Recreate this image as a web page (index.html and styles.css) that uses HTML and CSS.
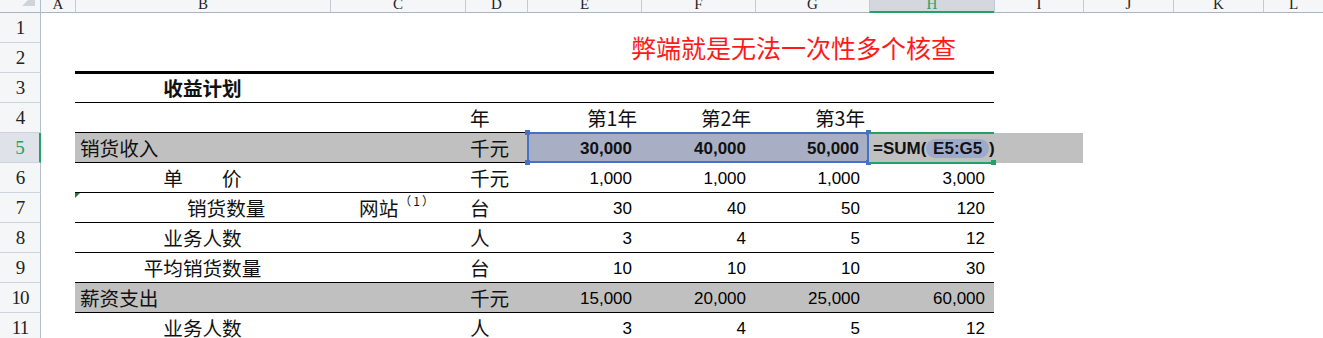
FILE: index.html
```html
<!DOCTYPE html>
<html lang="zh-CN">
<head>
<meta charset="utf-8">
<title>收益计划</title>
<link rel="stylesheet" href="styles.css">
</head>
<body>
<div class="sheet">
  <div class="row hdr">
    <div class="corner"><svg width="40" height="12" viewBox="0 0 40 12"><polygon points="22,6 35,6 35,-7" fill="#cfd3da"/></svg></div>
    <div class="ch a">A</div>
    <div class="ch">B</div>
    <div class="ch">C</div>
    <div class="ch">D</div>
    <div class="ch">E</div>
    <div class="ch">F</div>
    <div class="ch">G</div>
    <div class="ch act">H</div>
    <div class="ch">I</div>
    <div class="ch">J</div>
    <div class="ch">K</div>
    <div class="ch">L</div>
  </div>

  <div class="row"><div class="rh">1</div></div>

  <div class="row">
    <div class="rh">2</div><div></div>
    <div class="top"></div><div class="top"></div><div class="top"></div>
    <div class="top title">弊端就是无法一次性多个核查</div>
  </div>

  <div class="row r3">
    <div class="rh">3</div><div></div>
    <div class="t cj ctr bold">收益计划</div>
    <div class="t"></div><div class="t"></div><div class="t"></div><div class="t"></div><div class="t"></div><div class="t"></div>
  </div>

  <div class="row">
    <div class="rh">4</div><div></div>
    <div class="t"></div><div class="t"></div>
    <div class="t cj lft">年</div>
    <div class="t cj yr">第1年</div>
    <div class="t cj yr">第2年</div>
    <div class="t cj yr">第3年</div>
    <div class="t"></div>
  </div>

  <div class="row">
    <div class="rh act">5</div><div></div>
    <div class="t g cj lft">销货收入</div>
    <div class="t g"></div>
    <div class="t g cj lft">千元</div>
    <div class="sel">
      <div class="sn">30,000</div>
      <div class="sn">40,000</div>
      <div class="sn last">50,000</div>
      <span class="hd tl"></span><span class="hd tr"></span><span class="hd bl"></span><span class="hd br"></span>
    </div>
    <div class="edit">=SUM(<span class="ref"> E5:G5 </span>)<span class="gh"></span></div>
    <div class="g"></div>
  </div>

  <div class="row">
    <div class="rh">6</div><div></div>
    <div class="t cj ctr">单　　价</div>
    <div class="t"></div>
    <div class="t cj lft">千元</div>
    <div class="t num">1,000</div>
    <div class="t num">1,000</div>
    <div class="t num">1,000</div>
    <div class="t num">3,000</div>
  </div>

  <div class="row">
    <div class="rh">7</div><div></div>
    <div class="t cj flag ind">销货数量</div>
    <div class="t cj ctr"><span class="site">网站<span class="sup">（1）</span></span></div>
    <div class="t cj lft">台</div>
    <div class="t num">30</div>
    <div class="t num">40</div>
    <div class="t num">50</div>
    <div class="t num">120</div>
  </div>

  <div class="row">
    <div class="rh">8</div><div></div>
    <div class="t cj ctr">业务人数</div>
    <div class="t"></div>
    <div class="t cj lft">人</div>
    <div class="t num">3</div>
    <div class="t num">4</div>
    <div class="t num">5</div>
    <div class="t num">12</div>
  </div>

  <div class="row">
    <div class="rh">9</div><div></div>
    <div class="t cj ctr">平均销货数量</div>
    <div class="t"></div>
    <div class="t cj lft">台</div>
    <div class="t num">10</div>
    <div class="t num">10</div>
    <div class="t num">10</div>
    <div class="t num">30</div>
  </div>

  <div class="row">
    <div class="rh">10</div><div></div>
    <div class="t g cj lft">薪资支出</div>
    <div class="t g"></div>
    <div class="t g cj lft">千元</div>
    <div class="t g num">15,000</div>
    <div class="t g num">20,000</div>
    <div class="t g num">25,000</div>
    <div class="t g num">60,000</div>
  </div>

  <div class="row">
    <div class="rh">11</div><div></div>
    <div class="t cj ctr">业务人数</div>
    <div class="t"></div>
    <div class="t cj lft">人</div>
    <div class="t num">3</div>
    <div class="t num">4</div>
    <div class="t num">5</div>
    <div class="t num">12</div>
  </div>
</div>
</body>
</html>
```

FILE: styles.css
```css
* { box-sizing: border-box; }
html, body { margin: 0; padding: 0; background: #fff; }
body { overflow: hidden; width: 1323px; height: 338px; }

.sheet { width: 1323px; }

.row {
  display: grid;
  grid-template-columns: 41px 34px 255px 135px 62px 114px 114px 114px 125px 89px 90px 90px 60px;
  grid-template-rows: 30px;
  height: 30px;
}
.hdr { height: 13px; grid-template-rows: 13px; }

.corner {
  background: #f5f6f8;
  border-right: 1px solid #b4bdcb;
  border-bottom: 1px solid #aab4c5;
}
.corner svg { display: block; }

.ch {
  background: #f5f6f8;
  border-bottom: 1px solid #aab4c5;
  border-left: 1px solid #c3cad6;
  font-family: "Liberation Serif", serif;
  font-size: 15px;
  line-height: 8px;
  color: #222;
  text-align: center;
}
.ch.a { border-left: none; }
.ch.act {
  background: #d4d7de;
  border-bottom: 2px solid #21a366;
  color: #21a366;
}

.rh {
  background: #f5f6f8;
  border-right: 1px solid #b4bdcb;
  border-bottom: 1px solid #cdd3dd;
  font-family: "Liberation Serif", serif;
  font-size: 19px;
  line-height: 29px;
  letter-spacing: -1px;
  text-align: center;
  color: #222;
}
.rh.act {
  background: #dfe2e8;
  border-right: 2px solid #21a366;
  color: #21a366;
}

.t {
  border-bottom: 1px solid #000;
  display: flex;
  align-items: flex-end;
  white-space: nowrap;
}
.top { border-bottom: 2px solid #000; }
.r3 .t { border-top: 1px solid #000; }

.cj {
  font-family: "Noto Sans CJK SC", sans-serif;
  font-size: 19.6px;
  line-height: 20px;
  padding-bottom: 4px;
  color: #111;
}
.bold { font-weight: 700; }
.ctr { justify-content: center; }
.lft { padding-left: 5px; }
.ind { padding-left: 112px; }
.yr { justify-content: flex-end; padding-right: 4px; }

.num {
  font-family: "Liberation Sans", Arial, sans-serif;
  font-size: 17px;
  line-height: 20px;
  justify-content: flex-end;
  padding-right: 9px;
  padding-bottom: 3px;
  color: #000;
}

.g { background: #c0c0c0; }

.title {
  grid-column: 6 / 10;
  display: flex;
  align-items: flex-end;
  white-space: nowrap;
  font-family: "Noto Sans CJK SC", sans-serif;
  font-size: 25px;
  line-height: 30px;
  color: #ff1a1a;
  padding-left: 104px;
  padding-bottom: 9px;
}

.site { display: inline; }
.sup {
  font-size: 12px;
  line-height: 12px;
  letter-spacing: 2px;
  margin-left: 1px;
  vertical-align: 10px;
}

.flag { position: relative; }
.flag::before {
  content: "";
  position: absolute;
  left: 0;
  top: 0;
  width: 0;
  height: 0;
  border-top: 5px solid #1f7a36;
  border-right: 5px solid transparent;
}

.sel {
  grid-column: 6 / 9;
  margin-top: -1px;
  border: 2px solid #4472c4;
  background: #a8afc5;
  display: grid;
  grid-template-columns: 112px 114px 110px;
  position: relative;
}
.sn {
  display: flex;
  justify-content: flex-end;
  align-items: flex-end;
  font-family: "Liberation Sans", Arial, sans-serif;
  font-weight: 700;
  font-size: 17px;
  line-height: 20px;
  padding-right: 9px;
  padding-bottom: 2px;
  color: #111;
}
.sn.last { padding-right: 6px; }

.hd {
  position: absolute;
  width: 5px;
  height: 5px;
  background: #4472c4;
}
.hd.tl { left: -4px; top: -4px; }
.hd.tr { right: -4px; top: -4px; }
.hd.bl { left: -4px; bottom: -4px; }
.hd.br { right: -4px; bottom: -4px; }

.edit {
  grid-column: 9;
  margin: -1px 0;
  border-top: 2px solid #21a366;
  border-bottom: 2px solid #21a366;
  background: #c0c0c0;
  position: relative;
  white-space: nowrap;
  font-family: "Liberation Sans", Arial, sans-serif;
  font-weight: 700;
  font-size: 17px;
  line-height: 20px;
  padding-top: 5px;
  padding-left: 4px;
  color: #111;
}
.ref {
  background: #9eaaca;
  border-radius: 9px;
  padding: 0 2px;
}
.gh {
  position: absolute;
  right: -2px;
  bottom: -3px;
  width: 5px;
  height: 5px;
  background: #21a366;
}
```
